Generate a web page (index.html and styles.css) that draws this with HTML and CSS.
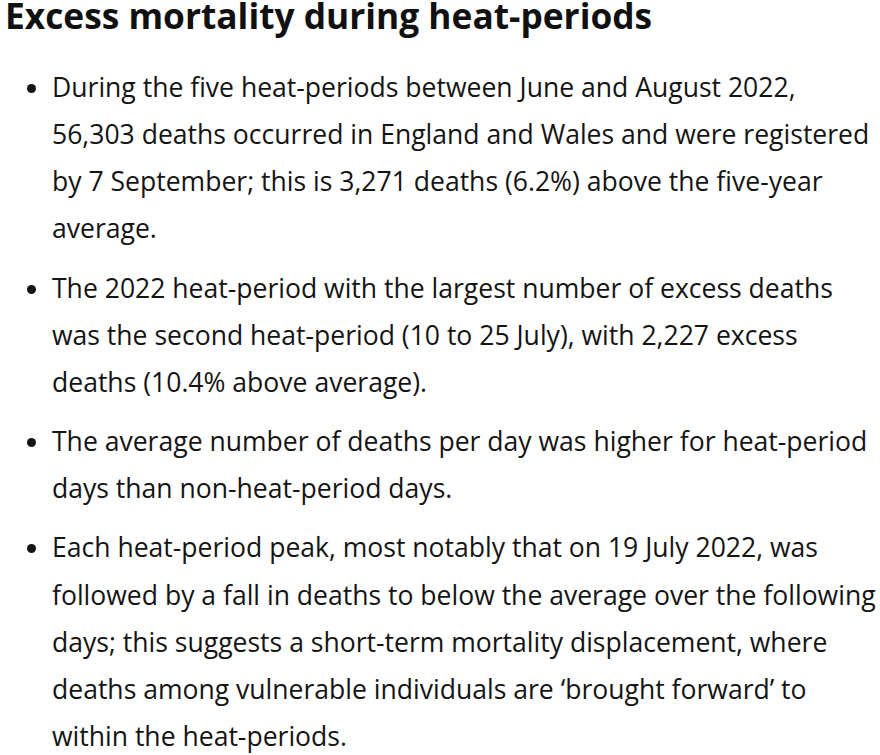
FILE: index.html
```html
<!DOCTYPE html>
<html lang="en">
<head>
<meta charset="utf-8">
<title>Excess mortality during heat-periods</title>
<link rel="stylesheet" href="styles.css">
</head>
<body>
<main class="section">
  <h1 class="title">Excess mortality during heat-periods</h1>
  <ul class="points">
    <li class="point">During the five heat-periods between June and August 2022, 56,303 deaths occurred in England and Wales and were registered by 7 September; this is 3,271 deaths (6.2%) above the five-year average.</li>
    <li class="point">The 2022 heat-period with the largest number of excess deaths was the second heat-period (10 to 25 July), with 2,227 excess deaths (10.4% above average).</li>
    <li class="point">The average number of deaths per day was higher for heat-period days than non-heat-period days.</li>
    <li class="point">Each heat-period peak, most notably that on 19 July 2022, was followed by a fall in deaths to below the average over the following days; this suggests a short-term mortality displacement, where deaths among vulnerable individuals are ‘brought forward’ to within the heat-periods.</li>
  </ul>
</main>
</body>
</html>
```

FILE: styles.css
```css
html, body {
  margin: 0;
  padding: 0;
  background: #ffffff;
}
body {
  font-family: "Open Sans", "Liberation Sans", sans-serif;
  color: #141414;
}
.section {
  padding: 0 2px 0 5px;
  width: 873px;
}
.title {
  margin: 0;
  font-size: 35.3px;
  font-weight: 700;
  line-height: 31px;
  color: #111111;
}
.points {
  margin: 33px 0 0 0;
  padding: 0 0 0 47px;
  list-style: disc;
}
.point {
  font-size: 26.55px;
  line-height: 47.15px;
  margin: 0 0 12px 0;
}
```
